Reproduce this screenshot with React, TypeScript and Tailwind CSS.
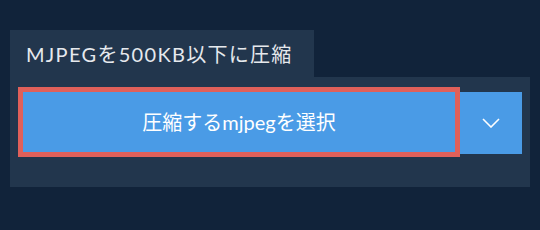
export default function App() {
  return (
    <div
      className="w-[540px] h-[230px] bg-[#11233a] pt-[30px] px-[10px]"
      style={{ fontFamily: 'Lato, "Noto Sans CJK JP", sans-serif' }}
    >
      <div className="inline-flex h-[47px] items-center bg-[#22364d] pl-4 pr-[21px] text-[20px] tracking-[1.3px] text-[#e6e9ed]">
        MJPEGを500KB以下に圧縮
      </div>
      <div className="w-[520px] h-[110px] bg-[#22364d] pt-[15px] pl-[13px]">
        <div className="flex items-start">
          <button className="w-[432px] h-[60px] bg-[#4a9be6] outline-[5px] outline-solid outline-[#e0605a] text-white text-[20px]">
            圧縮するmjpegを選択
          </button>
          <button className="ml-[5px] w-[62px] h-[62px] bg-[#4a9be6] flex items-center justify-center">
            <svg width="18" height="10" viewBox="0 0 18 10" fill="none">
              <path d="M1 1l8 8 8-8" stroke="white" strokeWidth="1.6" />
            </svg>
          </button>
        </div>
      </div>
    </div>
  );
}
